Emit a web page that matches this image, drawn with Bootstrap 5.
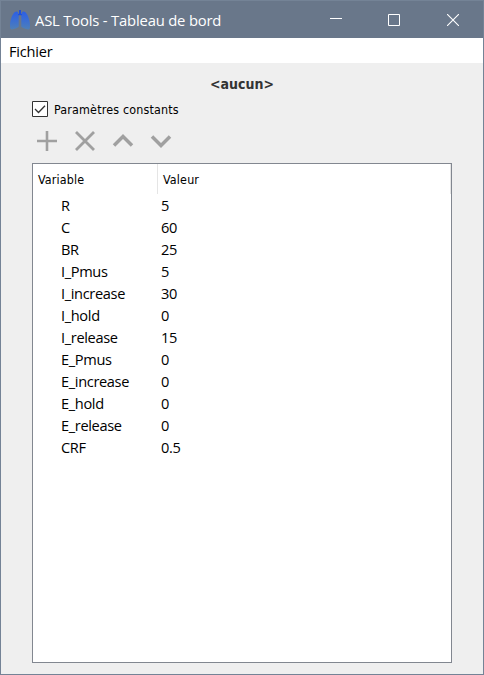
<!DOCTYPE html>
<html lang="fr">
<head>
<meta charset="utf-8">
<meta name="viewport" content="width=device-width, initial-scale=1">
<title>ASL Tools - Tableau de bord</title>
<link href="https://cdn.jsdelivr.net/npm/bootstrap@5.3.0/dist/css/bootstrap.min.css" rel="stylesheet">
<style>
body{font-family:"Open Sans","Noto Sans",sans-serif;color:#000;line-height:1}
.window{width:484px;height:675px;background:#efefef;border:1px solid #748396;overflow:hidden}
.titlebar{height:37px;background:#69778a;color:#fff;padding-left:8px}
.titlebar svg{display:block}
.title-text{font-size:14.8px;margin-left:5px;padding-top:1px;letter-spacing:-.18px}
.controls{width:176px}
.controls button{width:58px;height:37px;color:#fff}
.controls button:last-child{width:60px;padding-right:1px!important}
.controls button:first-child{padding-bottom:2px!important}
.menubar{height:25px;background:#fff;padding:2px 0 0 8px;font-size:14.6px;letter-spacing:-.2px}
.content{padding:0 31px 11px}
.heading{height:38px;padding-top:3px;font:bold 14px/1 "DejaVu Sans Condensed","DejaVu Sans",sans-serif;font-stretch:condensed;color:#333}
.tahoma{font-family:"DejaVu Sans Condensed","DejaVu Sans",sans-serif;font-stretch:condensed;font-size:12.4px;letter-spacing:.17px}
.option{height:16px;gap:6px}
.option span{padding-top:2px}
.option .form-check-input{display:none}
.tools{height:46px}
.tools button{width:38px;height:30px;padding:0;color:#a0a0a0}
.tools svg{display:block}
.tree{border:1px solid #828790;background:#fff;height:500px}
.tree-head{height:30px}
.tree-head>div{border-right:1px solid #e5e5e5;padding:3px 5px 0}
.tree .name-col{width:125px}
.tree-row{height:22px;font-size:14.6px;letter-spacing:-.35px;padding-top:1px}
.tree-row .name-col{padding-left:28px}
.tree-row .value-col{padding-left:3px}
</style>
<script src="https://cdn.jsdelivr.net/npm/bootstrap@5.3.0/dist/js/bootstrap.bundle.min.js"></script>
</head>
<body>
<div class="window d-flex flex-column">
  <header class="titlebar d-flex align-items-center flex-shrink-0">
    <svg width="21" height="20" viewBox="0 0 21 20" aria-hidden="true">
      <defs><linearGradient id="lung" x1="0" y1="0" x2="0" y2="1"><stop offset="0" stop-color="#2d5fe3"/><stop offset=".55" stop-color="#3d70d0"/><stop offset="1" stop-color="#4f80b6"/></linearGradient></defs>
      <path fill="url(#lung)" d="M7.500 1.500C4.500 1.500 1.500 8 1 14.500c-.2 3.500.3 5.300 2 5 2.500-.4 5-1.300 6.700-2.700V5C9.700 3 8.800 1.500 7.500 1.500zM14.500 1.500c3 0 6 6.500 6.500 13 .2 3.500-.3 5.300-2 5-2.500-.4-5-1.300-6.700-2.700V5c0-2 .9-3.500 2.200-3.500z"/>
      <path fill="#1f50dc" d="M10 0h2v5h-2zM9 4h4v1.200H9z"/>
    </svg>
    <span class="title-text text-nowrap">ASL Tools - Tableau de bord</span>
    <div class="controls d-flex ms-auto">
      <button class="btn border-0 rounded-0 p-0 d-flex align-items-center justify-content-center" aria-label="Réduire"><svg width="12" height="12"><path d="M0 5.500h12" stroke="currentColor"/></svg></button>
      <button class="btn border-0 rounded-0 p-0 d-flex align-items-center justify-content-center" aria-label="Agrandir"><svg width="12" height="12"><path d="M.5.5h11v11H.5z" fill="none" stroke="currentColor"/></svg></button>
      <button class="btn border-0 rounded-0 p-0 d-flex align-items-center justify-content-center" aria-label="Fermer"><svg width="12" height="12"><path d="M0 0l12 12M12 0L0 12" stroke="currentColor" stroke-width="1.100"/></svg></button>
    </div>
  </header>
  <nav class="menubar d-flex align-items-center flex-shrink-0">Fichier</nav>
  <main class="content d-flex flex-column flex-grow-1">
    <div class="heading d-flex align-items-center justify-content-center">&lt;aucun&gt;</div>
    <label class="option tahoma d-flex align-items-center">
      <input class="form-check-input" type="checkbox" checked>
      <svg width="16" height="16" aria-hidden="true"><path d="M.5.5h15v15H.5z" fill="#fff" stroke="#333"/><path d="M3 8l3.500 3.500L13 4.700" fill="none" stroke="#333" stroke-width="1.300"/></svg>
      <span>Paramètres constants</span>
    </label>
    <div class="tools d-flex pt-2">
      <button class="btn border-0" aria-label="Ajouter"><svg width="30" height="30"><path d="M5 16h20M15 6v20" stroke="currentColor" stroke-width="2.600"/></svg></button>
      <button class="btn border-0" aria-label="Supprimer"><svg width="30" height="30"><path d="M6 7l18 18M24 7L6 25" stroke="currentColor" stroke-width="2.800"/></svg></button>
      <button class="btn border-0" aria-label="Monter"><svg width="30" height="30"><path d="M6 20.500l9-9 9 9" fill="none" stroke="currentColor" stroke-width="3.500"/></svg></button>
      <button class="btn border-0" aria-label="Descendre"><svg width="30" height="30"><path d="M6 11.500l9 9 9-9" fill="none" stroke="currentColor" stroke-width="3.500"/></svg></button>
    </div>
    <section class="tree">
      <div class="tree-head tahoma d-flex">
        <div class="name-col d-flex align-items-center">Variable</div>
        <div class="flex-grow-1 d-flex align-items-center">Valeur</div>
      </div>
      <div class="tree-row d-flex align-items-center"><span class="name-col">R</span><span class="value-col">5</span></div>
      <div class="tree-row d-flex align-items-center"><span class="name-col">C</span><span class="value-col">60</span></div>
      <div class="tree-row d-flex align-items-center"><span class="name-col">BR</span><span class="value-col">25</span></div>
      <div class="tree-row d-flex align-items-center"><span class="name-col">I_Pmus</span><span class="value-col">5</span></div>
      <div class="tree-row d-flex align-items-center"><span class="name-col">I_increase</span><span class="value-col">30</span></div>
      <div class="tree-row d-flex align-items-center"><span class="name-col">I_hold</span><span class="value-col">0</span></div>
      <div class="tree-row d-flex align-items-center"><span class="name-col">I_release</span><span class="value-col">15</span></div>
      <div class="tree-row d-flex align-items-center"><span class="name-col">E_Pmus</span><span class="value-col">0</span></div>
      <div class="tree-row d-flex align-items-center"><span class="name-col">E_increase</span><span class="value-col">0</span></div>
      <div class="tree-row d-flex align-items-center"><span class="name-col">E_hold</span><span class="value-col">0</span></div>
      <div class="tree-row d-flex align-items-center"><span class="name-col">E_release</span><span class="value-col">0</span></div>
      <div class="tree-row d-flex align-items-center"><span class="name-col">CRF</span><span class="value-col">0.5</span></div>
    </section>
  </main>
</div>
</body>
</html>
